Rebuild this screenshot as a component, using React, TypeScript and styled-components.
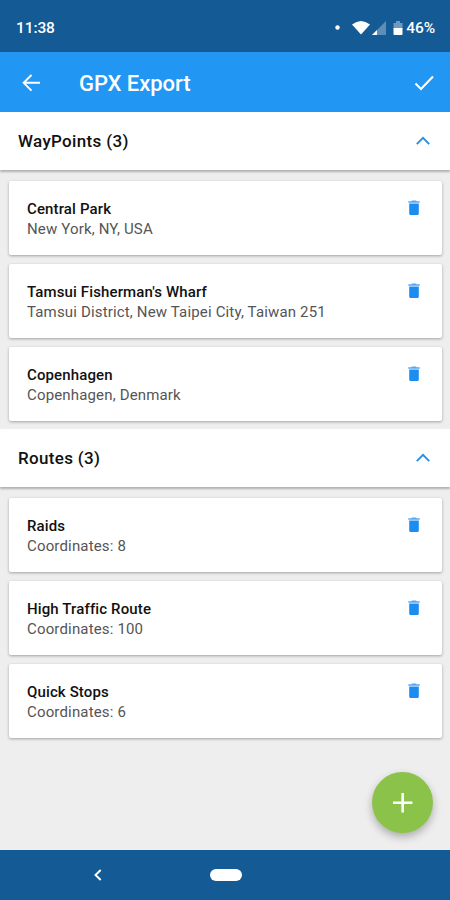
import React from 'react';
import styled, { createGlobalStyle } from 'styled-components';

const GlobalStyle = createGlobalStyle`
  * { box-sizing: border-box; }
  body { margin: 0; background: #eeeeee; font-family: Roboto, sans-serif; }
  svg { display: block; flex: none; }
`;

const Screen = styled.div`
  position: relative;
  display: flex;
  flex-direction: column;
  width: 450px;
  height: 900px;
  overflow: hidden;
  background: #eeeeee;
`;

const StatusBar = styled.header`
  display: flex;
  align-items: center;
  justify-content: space-between;
  height: 52px;
  flex: none;
  padding: 3px 15px 0 16px;
  background: #145a94;
  color: #fff;
`;

const StatusText = styled.span`
  font-size: 15.5px;
  font-weight: 500;
  line-height: 20px;
  letter-spacing: -0.1px;
`;

const StatusIcons = styled.div`
  display: flex;
  align-items: center;
`;

const AppBar = styled.div`
  display: flex;
  align-items: center;
  height: 60px;
  flex: none;
  padding: 2px 15px 0 20px;
  background: #2196f3;
  color: #fff;
`;

const Title = styled.h1`
  flex: 1;
  margin: 2px 0 0 36px;
  font-size: 22px;
  font-weight: 500;
  line-height: 28px;
  letter-spacing: -0.05px;
`;

const SectionHeader = styled.div`
  display: flex;
  align-items: center;
  justify-content: space-between;
  height: 58px;
  flex: none;
  padding: 0 19px 0 18px;
  background: #fff;
  box-shadow: 0 2px 2px rgba(0, 0, 0, 0.26);
`;

const SectionTitle = styled.h2`
  margin: 0;
  font-size: 17px;
  font-weight: 500;
  line-height: 22px;
  letter-spacing: 0.33px;
  color: #111;
`;

const CardList = styled.div`
  display: flex;
  flex-direction: column;
  gap: 8.8px;
  padding: 11px 8px 8.6px 9px;
`;

const Card = styled.article`
  display: flex;
  align-items: flex-start;
  justify-content: space-between;
  height: 74px;
  padding: 17px 20px 0 18px;
  border-radius: 2px;
  background: #fff;
  box-shadow: 0 1px 3px rgba(0, 0, 0, 0.32);
`;

const CardText = styled.div`
  padding-top: 1px;
`;

const Name = styled.div`
  font-size: 15px;
  font-weight: 500;
  line-height: 20px;
  letter-spacing: 0.13px;
  color: #111;
`;

const Detail = styled.div`
  font-size: 15px;
  line-height: 20px;
  letter-spacing: 0.16px;
  color: #555;
`;

const Fab = styled.button`
  position: absolute;
  left: 372px;
  top: 772px;
  display: flex;
  align-items: center;
  justify-content: center;
  width: 61px;
  height: 61px;
  padding: 0;
  border: 0;
  border-radius: 50%;
  background: #8bc34a;
  box-shadow: 0 4px 8px rgba(0, 0, 0, 0.28);
`;

const NavBar = styled.nav`
  display: flex;
  align-items: center;
  height: 50px;
  flex: none;
  margin-top: auto;
  padding-left: 93px;
  background: #145a94;
`;

const HomePill = styled.div`
  width: 32px;
  height: 12px;
  margin-left: 107px;
  border-radius: 6px;
  background: #fff;
`;

const sections = [
  {
    title: 'WayPoints',
    items: [
      { name: 'Central Park', detail: 'New York, NY, USA' },
      { name: "Tamsui Fisherman's Wharf", detail: 'Tamsui District, New Taipei City, Taiwan 251' },
      { name: 'Copenhagen', detail: 'Copenhagen, Denmark' },
    ],
  },
  {
    title: 'Routes',
    items: [
      { name: 'Raids', detail: 'Coordinates: 8' },
      { name: 'High Traffic Route', detail: 'Coordinates: 100' },
      { name: 'Quick Stops', detail: 'Coordinates: 6' },
    ],
  },
];

const SignalIcons = () => (
  <svg width="73" height="18" viewBox="0 0 73 18">
    <circle cx="4.5" cy="8.5" r="2.2" fill="#fff" />
    <path d="M19 5.5Q28 -1.5 37 5.5L28 15.5Z" fill="#fff" />
    <path d="M53 2V16H39Z" fill="#5c8eb7" />
    <path d="M44 11V16H39Z" fill="#fff" />
    <path d="M63 2h4v2h2.5v6h-9V4H63Z" fill="#6f9abf" />
    <path d="M60.5 9h9v6.2a.8.8 0 0 1-.8.8h-7.4a.8.8 0 0 1-.8-.8Z" fill="#fff" />
  </svg>
);

const BackArrow = () => (
  <svg width="23" height="22" viewBox="0 0 23 22" fill="none" stroke="#fff" strokeWidth="1.9">
    <path d="M20 10.8H4M11.5 3L3.7 10.8L11.5 18.6" />
  </svg>
);

const Check = () => (
  <svg width="22" height="20" viewBox="0 0 22 20" fill="none" stroke="#fff" strokeWidth="2.1">
    <path d="M2.5 10.5L8 16L20 3.5" />
  </svg>
);

const Chevron = () => (
  <svg width="16" height="12" viewBox="0 0 16 12" fill="none" stroke="#268fe6" strokeWidth="1.9">
    <path d="M1.8 9.2L8 2.9L14.2 9.2" />
  </svg>
);

const Trash = () => (
  <svg width="16" height="20" viewBox="0 0 16 20">
    <path d="M2.3 3.2h3l.8-.8h3.8l.8.8h3v1.6H2.3Z" fill="#56a8f3" />
    <path d="M3.2 5.4h9.6v10.4a1.1 1.1 0 0 1-1.1 1.1H4.3a1.1 1.1 0 0 1-1.1-1.1Z" fill="#1c8df0" />
  </svg>
);

export default function App() {
  return (
    <Screen>
      <GlobalStyle />
      <StatusBar>
        <StatusText>11:38</StatusText>
        <StatusIcons>
          <SignalIcons />
          <StatusText>46%</StatusText>
        </StatusIcons>
      </StatusBar>
      <AppBar>
        <BackArrow />
        <Title>GPX Export</Title>
        <Check />
      </AppBar>
      {sections.map((section) => (
        <React.Fragment key={section.title}>
          <SectionHeader>
            <SectionTitle>{section.title} ({section.items.length})</SectionTitle>
            <Chevron />
          </SectionHeader>
          <CardList>
            {section.items.map((item) => (
              <Card key={item.name}>
                <CardText>
                  <Name>{item.name}</Name>
                  <Detail>{item.detail}</Detail>
                </CardText>
                <Trash />
              </Card>
            ))}
          </CardList>
        </React.Fragment>
      ))}
      <Fab aria-label="Add">
        <svg width="24" height="24" viewBox="0 0 24 24" stroke="#fff" strokeWidth="2.6">
          <path d="M11.7 2V21.4M2 11.7H21.4" />
        </svg>
      </Fab>
      <NavBar>
        <svg width="10" height="14" viewBox="0 0 10 14" fill="none" stroke="#fff" strokeWidth="1.9">
          <path d="M7.7 2L2.5 7L7.7 12" />
        </svg>
        <HomePill />
      </NavBar>
    </Screen>
  );
}
